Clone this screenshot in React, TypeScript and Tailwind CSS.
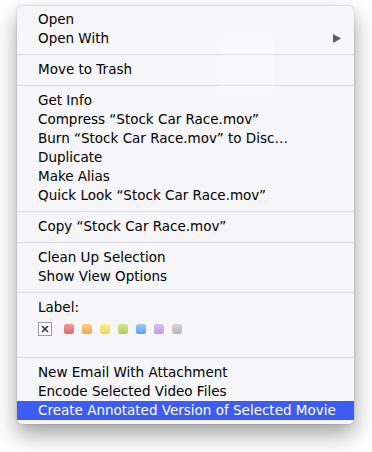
import { Fragment } from "react";

type Entry =
  | { kind: "item"; label: string; submenu?: boolean; selected?: boolean }
  | { kind: "sep" }
  | { kind: "labels" };

const entries: Entry[] = [
  { kind: "item", label: "Open" },
  { kind: "item", label: "Open With", submenu: true },
  { kind: "sep" },
  { kind: "item", label: "Move to Trash" },
  { kind: "sep" },
  { kind: "item", label: "Get Info" },
  { kind: "item", label: "Compress \u201cStock Car Race.mov\u201d" },
  { kind: "item", label: "Burn \u201cStock Car Race.mov\u201d to Disc\u2026" },
  { kind: "item", label: "Duplicate" },
  { kind: "item", label: "Make Alias" },
  { kind: "item", label: "Quick Look \u201cStock Car Race.mov\u201d" },
  { kind: "sep" },
  { kind: "item", label: "Copy \u201cStock Car Race.mov\u201d" },
  { kind: "sep" },
  { kind: "item", label: "Clean Up Selection" },
  { kind: "item", label: "Show View Options" },
  { kind: "sep" },
  { kind: "labels" },
  { kind: "sep" },
  { kind: "item", label: "New Email With Attachment" },
  { kind: "item", label: "Encode Selected Video Files" },
  { kind: "item", label: "Create Annotated Version of Selected Movie", selected: true },
];

const swatches = [
  "from-[#f29a9a] to-[#e26a6c]",
  "from-[#fbcf86] to-[#f0a848]",
  "from-[#faee95] to-[#ecd957]",
  "from-[#d6ea92] to-[#b3cf5c]",
  "from-[#9cccf8] to-[#5ea2ec]",
  "from-[#dcc2f2] to-[#bd97e0]",
  "from-[#d8d8d8] to-[#b6b6b6]",
];

function LabelRow() {
  return (
    <div className="h-[53px]">
      <div className="flex h-[19px] items-center pl-[21px]">Label:</div>
      <div className="flex items-center pl-[21px] pt-[5px]">
        <div className="flex h-[14px] w-[14px] items-center justify-center border border-[#9a9a9a] bg-white">
          <svg width="8" height="8" viewBox="0 0 8 8">
            <path d="M1 1 L7 7 M7 1 L1 7" stroke="#333" strokeWidth="1.6" />
          </svg>
        </div>
        <div className="ml-[12px] flex gap-[8px]">
          {swatches.map((s) => (
            <div key={s} className={`h-[10px] w-[10px] rounded-[2px] bg-gradient-to-b ${s}`} />
          ))}
        </div>
      </div>
    </div>
  );
}

export default function App() {
  return (
    <div className="h-[452px] w-[372px] bg-white pt-[6px] pl-[17px]" style={{ fontFamily: '"DejaVu Sans", "Liberation Sans", sans-serif' }}>
      <div className="relative w-[337px] rounded-[5px] bg-[#f6f5f8] py-[4px] text-[13.5px] text-black shadow-[0_10px_22px_rgba(0,0,0,0.38),0_0_2px_rgba(0,0,0,0.25)]">
        <div className="pointer-events-none absolute left-[203px] top-[31px] h-[56px] w-[55px] bg-white/25" />
        {entries.map((e, i) => (
          <Fragment key={i}>
            {e.kind === "sep" && (
              <div className="flex h-[12px] items-center">
                <div className="h-px w-full bg-[#d9d8dc]" />
              </div>
            )}
            {e.kind === "labels" && <LabelRow />}
            {e.kind === "item" && (
              <div
                className={`relative flex h-[19px] items-center pl-[21px] whitespace-nowrap ${
                  e.selected ? "bg-[#3c5cf3] text-white" : ""
                }`}
              >
                {e.label}
                {e.submenu && (
                  <svg className="absolute right-[13px]" width="8" height="9" viewBox="0 0 8 9">
                    <path d="M0 0 L8 4.5 L0 9 Z" fill="#5e5e5e" />
                  </svg>
                )}
              </div>
            )}
          </Fragment>
        ))}
      </div>
    </div>
  );
}
